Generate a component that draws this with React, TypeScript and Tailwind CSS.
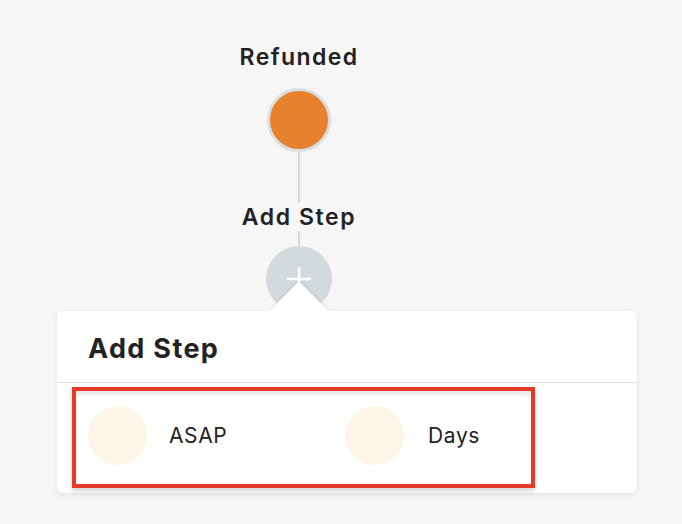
import React from 'react'

const font = { fontFamily: 'Inter, "Noto Sans", sans-serif' }

function Option({ label, className = '', gap = 'ml-[22px]' }: { label: string; className?: string; gap?: string }) {
  return (
    <div className={`flex items-center shrink-0 ${className}`}>
      <div className="w-[59px] h-[59px] rounded-full bg-[#fdf5e6] shrink-0" />
      <span className={`${gap} text-[21px] tracking-[0.03em] text-[#222]`}>{label}</span>
    </div>
  )
}

export default function App() {
  return (
    <div className="min-h-screen bg-[#f6f6f6] pt-[44px] pl-[57px]" style={font}>
      {/* flow nodes */}
      <div className="w-[484px] flex flex-col items-center">
        <div className="text-[23px] leading-[27px] font-semibold tracking-[0.06em] text-[#222]">Refunded</div>
        <div className="mt-[17px] w-[64px] h-[64px] rounded-full bg-[#e8812e] border-[3px] border-[#d9dee1]" />
        <div className="w-[2px] h-[51px] bg-[#d3d8db]" />
        <div className="text-[23px] leading-[28px] font-semibold tracking-[0.07em] text-[#222]">Add Step</div>
        <div className="w-[2px] h-[15px] bg-[#d3d8db]" />
        <div className="w-[66px] h-[66px] rounded-full bg-[#d3dadd] flex items-center justify-center">
          <svg width="26" height="26" viewBox="0 0 26 26">
            <path d="M13 1v24M1 13h24" stroke="#fff" strokeWidth="2.5" />
          </svg>
        </div>
      </div>

      {/* popover card */}
      <div className="relative -mt-[1px] w-[580px] h-[182px] bg-white rounded-[6px] shadow-[0_2px_6px_rgba(0,0,0,0.08)]">
        <div className="absolute left-[221px] -top-[21px] w-[42px] h-[42px] rotate-45 bg-white shadow-[0_0_4px_rgba(0,0,0,0.12)]" />
        <div className="relative z-10 h-[72px] bg-white rounded-t-[6px] border-b border-[#d4e2e6] flex items-center pl-[31px] pt-[5px]">
          <span className="text-[27px] font-bold tracking-[0.05em] text-[#222]">Add Step</span>
        </div>
        <div className="pl-[15px] pt-[4px]">
          <div className="w-[463px] h-[101px] border-[4px] border-[#e53b26] shadow-[0_3px_5px_rgba(0,0,0,0.18),inset_0_4px_4px_rgba(0,0,0,0.1)] flex items-center pl-[12px] pb-[4px]">
            <Option label="ASAP" className="w-[257px]" />
            <Option label="Days" gap="ml-[24px]" />
          </div>
        </div>
      </div>
    </div>
  )
}
